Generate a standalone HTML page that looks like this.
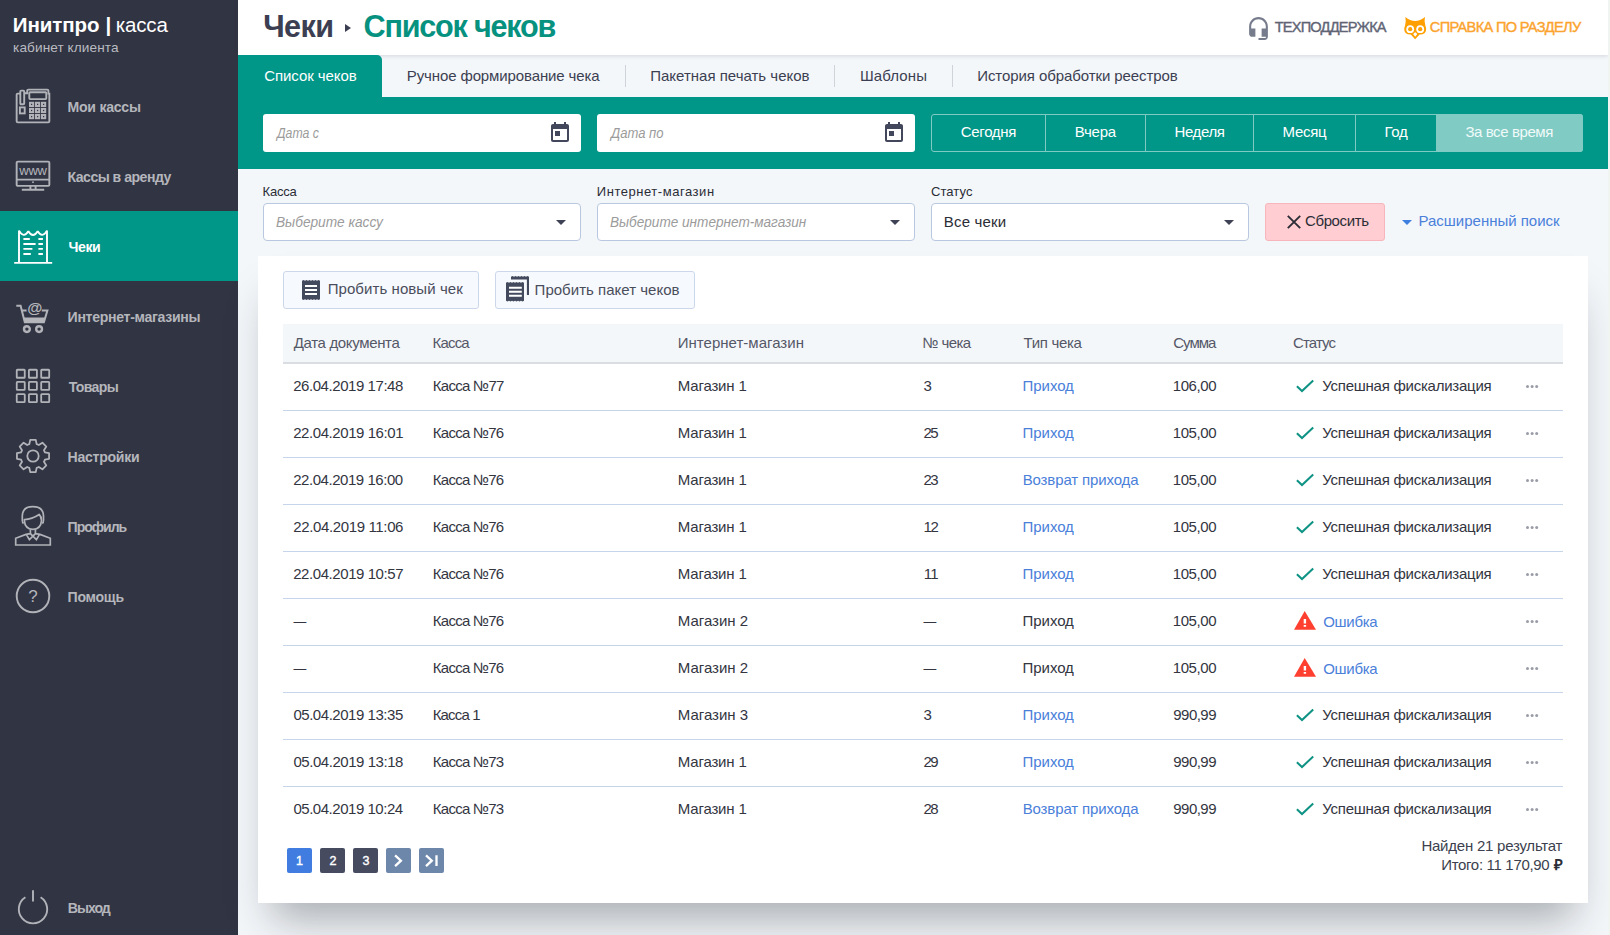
<!DOCTYPE html>
<html lang="ru">
<head>
<meta charset="utf-8">
<title>Чеки — Список чеков</title>
<style>
*{box-sizing:border-box;margin:0;padding:0}
html,body{width:1610px;height:935px;overflow:hidden}
body{font-family:"Liberation Sans",sans-serif;font-size:15px;color:#2b2d36;background:#f4f7fa;position:relative}
.t{position:absolute;white-space:pre;line-height:20px}
.md{-webkit-text-stroke:.4px currentColor}
svg{position:absolute;overflow:visible}
#side{position:absolute;left:0;top:0;width:238px;height:935px;background:#313442}
#act{position:absolute;left:0;top:211px;width:238px;height:70px;background:#009688}
.ic{fill:none;stroke:#b1b3b9;stroke-width:1.9}
.ic text{fill:#b4b6bc;stroke:none;font-family:"Liberation Sans",sans-serif}
#main{position:absolute;left:0;top:0;width:1608px;height:935px}
#hdr{position:absolute;left:238px;top:0;width:1370px;height:55px;background:#fff;box-shadow:0 1px 4px rgba(60,70,90,.18)}
#tri{position:absolute;left:345px;top:24px;width:0;height:0;border-left:6px solid #3c3f52;border-top:4.8px solid transparent;border-bottom:4.8px solid transparent}
#tab0{position:absolute;left:238px;top:55px;width:144px;height:42px;background:#009688;border-radius:0 5px 0 0}
.sep{position:absolute;top:65px;width:1px;height:22px;background:#cfd3da}
#bar{position:absolute;left:238px;top:97px;width:1370px;height:72px;background:#009688}
.din{position:absolute;top:114px;width:318px;height:38px;background:#fff;border-radius:3px}
#per{position:absolute;left:931px;top:114px;width:652px;height:38px;border:1px solid #7fcbc3;border-radius:3px}
#per i{position:absolute;top:0;width:1px;height:36px;background:#7fcbc3}
#per b{position:absolute;left:504px;top:-1px;width:147px;height:38px;background:#80cbc4;border-radius:0 3px 3px 0}
.sel{position:absolute;top:203px;width:318px;height:38px;border:1px solid #b9c8e0;border-radius:4px;background:#fff}
.sel i{position:absolute;left:291.800px;top:16.200px;width:0;height:0;border-top:5.500px solid #3f4254;border-left:5px solid transparent;border-right:5px solid transparent}
#rst{position:absolute;left:1265px;top:203px;width:120px;height:38px;background:#ffcdd2;border:1px solid #f6b6bb;border-radius:3px}
#advi{position:absolute;left:1402px;top:219.800px;width:0;height:0;border-top:5.200px solid #3f7fe0;border-left:5px solid transparent;border-right:5px solid transparent}
#card{position:absolute;left:258px;top:256px;width:1330px;height:647px;background:#fff;box-shadow:0 30px 40px -14px rgba(20,25,35,.34)}
.btn{position:absolute;top:15px;height:38px;border:1px solid #cdd7eb;background:#f6f9fd;border-radius:3px}
#th{position:absolute;left:25px;top:68px;width:1280px;height:40px;background:#f4f7fa;border-bottom:2px solid #dadee3}
.ln{position:absolute;left:25px;width:1280px;height:1px;background:#c7d5ea}
.dots{position:absolute;left:1267.5px;width:3px;height:3px;border-radius:2px;background:#9a9da7;box-shadow:4.6px 0 0 #9a9da7,9.2px 0 0 #9a9da7}
.pg{position:absolute;top:592px;width:25px;height:25px;border-radius:2px}
#strip{position:absolute;left:1608px;top:0;width:2px;height:935px;background:#f1f5f1}
</style>
</head>
<body>
<div id="side">
  <div id="act"></div>
  <span class="t" style="left:12.8px;top:15px;font-size:20.5px;letter-spacing:-0.09px;font-weight:bold;color:#fff">Инитпро</span><span class="t" style="left:105.4px;top:15px;font-size:20.5px;font-weight:bold;color:#fff">|</span><span class="t" style="left:115.7px;top:15px;font-size:20.5px;letter-spacing:-0.13px;color:#fff">касса</span>
  <span class="t" style="left:13.1px;top:37.6px;font-size:13.6px;letter-spacing:0.09px;color:#b9bbc1">кабинет клиента</span>
  <!-- Мои кассы -->
  <svg class="ic" style="left:16px;top:89px" width="34" height="34" viewBox="0 0 34 34">
    <path d="M4.3 4.6H1.8Q.65 4.6 .65 5.8V32.2Q.65 33.35 1.8 33.35H32.2Q33.35 33.35 33.35 32.2V5.4M8.2 4.2H11.2V1.8Q11.2 .65 12.4 .65H31.2Q32.4 .65 32.4 1.8V4.6H33.35V6"/>
    <rect x="4.3" y="1.6" width="3.9" height="13.6" rx=".8"/>
    <rect x="13.3" y="3.3" width="17" height="6.8" rx=".8"/>
    <rect x="3.9" y="18.4" width="4.8" height="6" />
    <g stroke-width="2">
    <rect x="14" y="13.8" width="3.2" height="3.2"/><rect x="20" y="13.8" width="3.2" height="3.2"/><rect x="26" y="13.8" width="3.2" height="3.2"/>
    <rect x="14" y="19.9" width="3.2" height="3.2"/><rect x="20" y="19.9" width="3.2" height="3.2"/><rect x="26" y="19.9" width="3.2" height="3.2"/>
    <rect x="14" y="26" width="3.2" height="3.2"/><rect x="20" y="26" width="3.2" height="3.2"/><rect x="26" y="26" width="3.2" height="3.2"/>
    </g>
  </svg>
  <span class="t" style="left:67.5px;top:96.6px;font-size:14.1px;letter-spacing:-0.26px;font-weight:bold;color:#b4b6bc">Мои кассы</span>
  <!-- Кассы в аренду -->
  <svg class="ic" style="left:16px;top:161px" width="34" height="30" viewBox="0 0 34 30">
    <rect x=".65" y=".65" width="32.7" height="24.2" rx="1.2"/>
    <path d="M.65 18.6H33.35M14.4 24.9V28.7M19.6 24.9V28.7M5.8 28.8H28.2"/>
    <circle cx="17" cy="21.2" r=".9" fill="#b4b6bc" stroke="none"/>
    <text x="17" y="14.2" font-size="13" text-anchor="middle" letter-spacing="-.2">www</text>
  </svg>
  <span class="t" style="left:67.5px;top:166.6px;font-size:14.1px;letter-spacing:-0.52px;font-weight:bold;color:#b4b6bc">Кассы в аренду</span>
  <!-- Чеки -->
  <svg style="left:14px;top:229px;fill:none;stroke:#fff;stroke-width:1.9;stroke-linejoin:bevel" width="38" height="36" viewBox="0 0 38 36">
    <path d="M.2 33.9H38.2M5 33.9V1.6Q9.700 9.800 14.300 2.200Q19 9.800 23.700 2.200Q28.300 9.800 33 1.600V33.900"/>
    <path stroke-width="1.8" d="M9.4 10H15.8M9.4 15H21.6M9.4 19.8H18.4M9.4 25H16.8M24.4 10H28.9M24.4 15H28.9M24.4 19.8H28.9M24.4 25H28.9"/>
  </svg>
  <span class="t" style="left:68.4px;top:236.6px;font-size:14.1px;letter-spacing:-0.37px;font-weight:bold;color:#fff">Чеки</span>
  <!-- Интернет-магазины -->
  <svg class="ic" style="left:16px;top:300px" width="34" height="34" viewBox="0 0 34 34">
    <path stroke-width="2" d="M.3 5.700H4.600L8.800 22.300H27.900L31.400 10.500H25.800M6 10.500H10.600"/>
    <path d="M7.4 17.4H29.6L27.9 22.6H8.8Z" fill="#b4b6bc" stroke="none"/>
    <circle cx="10.900" cy="29.100" r="2.900" stroke-width="2.400"/><circle cx="23.100" cy="29.100" r="2.900" stroke-width="2.400"/>
    <text x="18.700" y="12.700" font-size="15.500" font-weight="bold" text-anchor="middle">@</text>
  </svg>
  <span class="t" style="left:67.6px;top:306.6px;font-size:14.1px;letter-spacing:-0.31px;font-weight:bold;color:#b4b6bc">Интернет-магазины</span>
  <!-- Товары -->
  <svg class="ic" style="left:16px;top:369px;stroke-width:1.8" width="34" height="34" viewBox="0 0 34 34">
    <rect x=".75" y=".75" width="8" height="8" rx=".6"/><rect x="12.9" y=".75" width="8" height="8" rx=".6"/><rect x="25.2" y=".75" width="8" height="8" rx=".6"/>
    <rect x=".75" y="12.8" width="8" height="8" rx=".6"/><rect x="12.9" y="12.8" width="8" height="8" rx=".6"/><rect x="25.2" y="12.8" width="8" height="8" rx=".6"/>
    <rect x=".75" y="25.1" width="8" height="8" rx=".6"/><rect x="12.9" y="25.1" width="8" height="8" rx=".6"/><rect x="25.2" y="25.1" width="8" height="8" rx=".6"/>
  </svg>
  <span class="t" style="left:68.8px;top:376.6px;font-size:14.1px;letter-spacing:-0.67px;font-weight:bold;color:#b4b6bc">Товары</span>
  <!-- Настройки -->
  <svg class="ic" style="left:16px;top:439px;stroke-width:1.8;stroke-linejoin:round" width="34" height="34" viewBox="0 0 34 34">
    <path d="M13.34 5.15L14.24 0.93L19.76 0.93L20.66 5.15A12.4 12.4 0 0 1 22.79 6.03L26.41 3.69L30.31 7.59L27.97 11.21A12.4 12.4 0 0 1 28.85 13.34L33.07 14.24L33.07 19.76L28.85 20.66A12.4 12.4 0 0 1 27.97 22.79L30.31 26.41L26.41 30.31L22.79 27.97A12.4 12.4 0 0 1 20.66 28.85L19.76 33.07L14.24 33.07L13.34 28.85A12.4 12.4 0 0 1 11.21 27.97L7.59 30.31L3.69 26.41L6.03 22.79A12.4 12.4 0 0 1 5.15 20.66L0.93 19.76L0.93 14.24L5.15 13.34A12.4 12.4 0 0 1 6.03 11.21L3.69 7.59L7.59 3.69L11.21 6.03A12.4 12.4 0 0 1 13.34 5.15Z"/>
    <circle cx="17" cy="17" r="5.7"/>
  </svg>
  <span class="t" style="left:67.6px;top:446.6px;font-size:14.1px;letter-spacing:-0.29px;font-weight:bold;color:#b4b6bc">Настройки</span>
  <!-- Профиль -->
  <svg class="ic" style="left:15px;top:506px;stroke-width:1.7" width="36" height="40" viewBox="0 0 36 40">
    <path d="M8.6 17.5Q7.2 16.6 7.3 13.6V9.8Q7.6 .7 17.7 .7Q28.3 .7 28.5 9.8V13.6Q28.6 16.6 27.3 17.5"/>
    <path d="M9.4 13.7Q17 13.2 24.2 8.5Q26.4 10.5 26.5 14.5Q26 23 17.9 23.4Q9.8 23 9.4 14.5Z"/>
    <path d="M15.4 23.2V27.6M20.4 23.2V27.6M15.4 27.6L11 28.4L.7 32.3V39H35.3V32.3L25 28.4L20.4 27.6M15.4 27.6L17.9 30.2L20.4 27.6M11.4 28.6L14.4 33.6L17.9 30.2L21.4 33.6L24.4 28.6"/>
  </svg>
  <span class="t" style="left:67.6px;top:516.6px;font-size:14.1px;letter-spacing:-1.05px;font-weight:bold;color:#b4b6bc">Профиль</span>
  <!-- Помощь -->
  <svg class="ic" style="left:16px;top:579px" width="34" height="34" viewBox="0 0 34 34">
    <circle cx="17" cy="17" r="16.3"/>
    <text x="17" y="23" font-size="17" text-anchor="middle">?</text>
  </svg>
  <span class="t" style="left:67.6px;top:586.6px;font-size:14.1px;letter-spacing:-0.29px;font-weight:bold;color:#b4b6bc">Помощь</span>
  <!-- Выход -->
  <svg class="ic" style="left:18px;top:890px" width="30" height="34" viewBox="0 0 30 34">
    <path d="M15 .2V11.4M7.4 7.2A14.2 14.2 0 1 0 22.6 7.2"/>
  </svg>
  <span class="t" style="left:67.8px;top:897.6px;font-size:14.1px;letter-spacing:-1.02px;font-weight:bold;color:#b4b6bc">Выход</span>
</div>
<div id="main">
  <div id="hdr"></div>
  <span class="t" style="left:263.2px;top:16.2px;font-size:30.6px;letter-spacing:-0.58px;font-weight:bold;color:#3c3f52">Чеки</span><div id="tri"></div><span class="t" style="left:363.5px;top:16.2px;font-size:30.6px;letter-spacing:-1.21px;font-weight:bold;color:#07917f">Список чеков</span>
  <svg style="left:1245.5px;top:15.5px" width="25" height="25" viewBox="0 0 24 24"><path fill="#767c8b" d="M12 1c-4.97 0-9 4.03-9 9v7c0 1.66 1.34 3 3 3h3v-8H5v-2c0-3.870 3.130-7 7-7s7 3.130 7 7v2h-4v8h4v1h-7v2h6c1.660 0 3-1.340 3-3V10c0-4.970-4.030-9-9-9z"/></svg>
  <span class="t md" style="left:1274.7px;top:16.8px;font-size:14.6px;letter-spacing:-0.8px;color:#5f6475">ТЕХПОДДЕРЖКА</span>
  <svg style="left:1403.8px;top:16.6px" width="22.4" height="22.2" viewBox="0 0 22.4 22.2">
    <path fill="#ffa000" d="M1.3 0Q11.1 8.2 21 0Q20 4.500 21.300 8.200Q23.300 13.500 20.500 16.200Q18.500 17.700 15.600 17.500L11.100 22.200L6.800 17.500Q3.900 17.700 1.900 16.200Q-.900 13.500 1.100 8.200Q2.400 4.500 1.300 0Z"/>
    <circle cx="6.2" cy="12.2" r="3.9" fill="#fff"/><circle cx="16.2" cy="12.2" r="3.9" fill="#fff"/>
    <circle cx="6.2" cy="12.2" r="2.1" fill="#ffa000"/><circle cx="16.2" cy="12.2" r="2.1" fill="#ffa000"/>
    <path fill="#fff" d="M11.2 15.200Q13.400 16 12.900 17.600L11.200 19.700L9.500 17.600Q9 16 11.200 15.200Z"/>
  </svg>
  <span class="t md" style="left:1429.8px;top:16.8px;font-size:14.6px;letter-spacing:-0.68px;color:#fba32e">СПРАВКА ПО РАЗДЕЛУ</span>
  <div id="tab0"></div>
  <span class="t" style="left:264.2px;top:66px;font-size:15px;letter-spacing:-0.07px;color:#fff">Список чеков</span><span class="t" style="left:406.8px;top:66px;font-size:15px;letter-spacing:-0.12px;color:#3c3f52">Ручное формирование чека</span><div class="sep" style="left:625px"></div><span class="t" style="left:650.2px;top:66px;font-size:15px;color:#3c3f52">Пакетная печать чеков</span><div class="sep" style="left:834px"></div><span class="t" style="left:859.9px;top:66px;font-size:15px;letter-spacing:0.13px;color:#3c3f52">Шаблоны</span><div class="sep" style="left:952px"></div><span class="t" style="left:977.2px;top:66px;font-size:15px;letter-spacing:-0.08px;color:#3c3f52">История обработки реестров</span>
  <div id="bar"></div>
  <div class="din" style="left:263px"><svg style="left:284.500px;top:6.800px" width="24" height="24" viewBox="0 0 24 24"><path fill="#43475b" d="M19 3h-1V1h-2v2H8V1H6v2H5c-1.110 0-1.990.900-1.990 2L3 19c0 1.100.890 2 2 2h14c1.100 0 2-.900 2-2V5c0-1.100-.900-2-2-2zm0 16H5V8h14v11zM7 10h5v5H7z"/></svg></div>
  <div class="din" style="left:597px"><svg style="left:284.500px;top:6.800px" width="24" height="24" viewBox="0 0 24 24"><path fill="#43475b" d="M19 3h-1V1h-2v2H8V1H6v2H5c-1.110 0-1.990.900-1.990 2L3 19c0 1.100.890 2 2 2h14c1.100 0 2-.900 2-2V5c0-1.100-.900-2-2-2zm0 16H5V8h14v11zM7 10h5v5H7z"/></svg></div>
  <span class="t" style="left:276.9px;top:123.2px;font-size:14.6px;transform:scaleX(0.839);transform-origin:0 0;font-style:italic;color:#9b9b9b">Дата с</span><span class="t" style="left:610.5px;top:123.2px;font-size:14.6px;transform:scaleX(0.894);transform-origin:0 0;font-style:italic;color:#9b9b9b">Дата по</span>
  <div id="per"><b></b><i style="left:113px"></i><i style="left:213px"></i><i style="left:321px"></i><i style="left:423px"></i></div>
  <span class="t" style="left:960.7px;top:122.3px;font-size:15px;letter-spacing:-0.29px;color:#fff">Сегодня</span><span class="t" style="left:1074.7px;top:122.3px;font-size:15px;letter-spacing:-0.23px;color:#fff">Вчера</span><span class="t" style="left:1174.5px;top:122.3px;font-size:15px;letter-spacing:-0.37px;color:#fff">Неделя</span><span class="t" style="left:1282.5px;top:122.3px;font-size:15px;letter-spacing:-0.27px;color:#fff">Месяц</span><span class="t" style="left:1384.4px;top:122.3px;font-size:15px;letter-spacing:-0.29px;color:#fff">Год</span><span class="t" style="left:1465.4px;top:122.3px;font-size:15px;letter-spacing:-0.41px;color:#f1faf9">За все время</span>
  <span class="t" style="left:262.6px;top:182px;font-size:13px;letter-spacing:-0.25px;color:#2b2d36">Касса</span><span class="t" style="left:596.8px;top:182px;font-size:13px;letter-spacing:0.54px;color:#2b2d36">Интернет-магазин</span><span class="t" style="left:931.0px;top:182px;font-size:13px;letter-spacing:0.07px;color:#2b2d36">Статус</span>
  <div class="sel" style="left:263px"><i></i></div>
  <div class="sel" style="left:597px"><i></i></div>
  <div class="sel" style="left:931px"><i></i></div>
  <span class="t" style="left:276.0px;top:212.2px;font-size:15px;transform:scaleX(0.912);transform-origin:0 0;font-style:italic;color:#9b9b9b">Выберите кассу</span><span class="t" style="left:610.3px;top:212.2px;font-size:15px;transform:scaleX(0.906);transform-origin:0 0;font-style:italic;color:#9b9b9b">Выберите интернет-магазин</span><span class="t" style="left:943.8px;top:212px;font-size:15px;letter-spacing:0.18px;color:#2b2d36">Все чеки</span>
  <div id="rst"><svg style="left:20.500px;top:11.400px" width="14" height="14" viewBox="0 0 14 14"><path d="M.8 .8L13.200 13.200M13.200 .8L.8 13.200" stroke="#2b2d36" stroke-width="1.900" fill="none"/></svg></div>
  <span class="t" style="left:1305.0px;top:211.4px;font-size:15px;letter-spacing:-0.39px;color:#2b2d36">Сбросить</span>
  <div id="advi"></div><span class="t" style="left:1418.5px;top:211.2px;font-size:15px;letter-spacing:-0.01px;color:#4a80da">Расширенный поиск</span>
  <div id="card">
    <div class="btn" style="left:25px;width:196px">
      <svg style="left:18px;top:7.900px" width="18" height="20" viewBox="0 0 18 20"><path fill="#444a5e" d="M0 .7L1.500 0L3 .7L4.500 0L6 .7L7.500 0L9 .7L10.500 0L12 .7L13.500 0L15 .7L16.500 0L18 .7V19.300L16.500 20L15 19.300L13.500 20L12 19.300L10.500 20L9 19.300L7.500 20L6 19.300L4.500 20L3 19.300L1.500 20L0 19.300Z"/><path d="M3 6H15M3 10H15M3 14H15" stroke="#fff" stroke-width="2"/></svg>
    </div>
    <div class="btn" style="left:237px;width:200px">
      <svg style="left:10.200px;top:4.300px" width="23" height="26" viewBox="0 0 23 26"><path fill="#444a5e" d="M0 6.700L1.500 6L3 6.700L4.500 6L6 6.700L7.500 6L9 6.700L10.500 6L12 6.700L13.500 6L15 6.700L16.500 6L18 6.700V24.700L16.500 25.400L15 24.700L13.500 25.400L12 24.700L10.500 25.400L9 24.700L7.500 25.400L6 24.700L4.500 25.400L3 24.700L1.500 25.400L0 24.700Z"/><path fill="#444a5e" d="M5 .7L6.500 0L8 .7L9.500 0L11 .7L12.500 0L14 .7L15.500 0L17 .7L18.500 0L20 .7L21.500 0L23 .7V19H20.900V3.500H5Z"/><path d="M3 11.700H15.800M3 15.700H15.800M3 19.700H15.800" stroke="#fff" stroke-width="2"/></svg>
    </div>
    <span class="t" style="left:69.7px;top:23.2px;font-size:15px;letter-spacing:0.07px;color:#4a4d5c">Пробить новый чек</span><span class="t" style="left:276.6px;top:23.7px;font-size:15px;letter-spacing:0.02px;color:#4a4d5c">Пробить пакет чеков</span>
    <div id="th"></div>
    <span class="t" style="left:35.8px;top:76.9px;font-size:15px;letter-spacing:-0.35px;color:#555867">Дата документа</span><span class="t" style="left:174.6px;top:76.9px;font-size:15px;letter-spacing:-0.84px;color:#555867">Касса</span><span class="t" style="left:419.7px;top:76.9px;font-size:15px;letter-spacing:0.02px;color:#555867">Интернет-магазин</span><span class="t" style="left:664.6px;top:76.9px;font-size:15px;letter-spacing:-0.65px;color:#555867">№ чека</span><span class="t" style="left:765.6px;top:76.9px;font-size:15px;letter-spacing:-0.34px;color:#555867">Тип чека</span><span class="t" style="left:915.3px;top:76.9px;font-size:15px;letter-spacing:-1.04px;color:#555867">Сумма</span><span class="t" style="left:1035.1px;top:76.9px;font-size:15px;letter-spacing:-0.91px;color:#555867">Статус</span>
    <div class="row"><span class="t" style="left:35.2px;top:119.9px;font-size:15px;letter-spacing:-0.44px;color:#33353f">26.04.2019 17:48</span><span class="t" style="left:174.8px;top:119.9px;font-size:15px;letter-spacing:-0.72px;color:#33353f">Касса №77</span><span class="t" style="left:419.8px;top:119.9px;font-size:15px;letter-spacing:-0.18px;color:#33353f">Магазин 1</span><span class="t" style="left:665.4px;top:119.9px;font-size:15px;color:#33353f">3</span><span class="t" style="left:764.6px;top:119.9px;font-size:15px;letter-spacing:-0.07px;color:#4a80da">Приход</span><span class="t" style="left:914.8px;top:119.9px;font-size:15px;letter-spacing:-0.43px;color:#33353f">106,00</span><span class="t" style="left:1064.3px;top:119.9px;font-size:15px;letter-spacing:-0.25px;color:#33353f">Успешная фискализация</span><svg style="left:1038px;top:123.2px" width="19" height="14" viewBox="0 0 19 14"><path d="M.9 7.300L6 12.100L17.200 1.500" fill="none" stroke="#0e9384" stroke-width="2"/></svg><div class="dots" style="top:129.1px"></div><div class="ln" style="top:154px"></div></div>
    <div class="row"><span class="t" style="left:35.2px;top:166.9px;font-size:15px;letter-spacing:-0.43px;color:#33353f">22.04.2019 16:01</span><span class="t" style="left:174.8px;top:166.9px;font-size:15px;letter-spacing:-0.75px;color:#33353f">Касса №76</span><span class="t" style="left:419.8px;top:166.9px;font-size:15px;letter-spacing:-0.18px;color:#33353f">Магазин 1</span><span class="t" style="left:665.4px;top:166.9px;font-size:15px;letter-spacing:-1.45px;color:#33353f">25</span><span class="t" style="left:764.6px;top:166.9px;font-size:15px;letter-spacing:-0.07px;color:#4a80da">Приход</span><span class="t" style="left:914.8px;top:166.9px;font-size:15px;letter-spacing:-0.43px;color:#33353f">105,00</span><span class="t" style="left:1064.3px;top:166.9px;font-size:15px;letter-spacing:-0.25px;color:#33353f">Успешная фискализация</span><svg style="left:1038px;top:170.2px" width="19" height="14" viewBox="0 0 19 14"><path d="M.9 7.300L6 12.100L17.200 1.500" fill="none" stroke="#0e9384" stroke-width="2"/></svg><div class="dots" style="top:176.1px"></div><div class="ln" style="top:201px"></div></div>
    <div class="row"><span class="t" style="left:35.2px;top:213.9px;font-size:15px;letter-spacing:-0.45px;color:#33353f">22.04.2019 16:00</span><span class="t" style="left:174.8px;top:213.9px;font-size:15px;letter-spacing:-0.75px;color:#33353f">Касса №76</span><span class="t" style="left:419.8px;top:213.9px;font-size:15px;letter-spacing:-0.18px;color:#33353f">Магазин 1</span><span class="t" style="left:665.4px;top:213.9px;font-size:15px;letter-spacing:-1.45px;color:#33353f">23</span><span class="t" style="left:764.7px;top:213.9px;font-size:15px;letter-spacing:-0.13px;color:#4a80da">Возврат прихода</span><span class="t" style="left:914.8px;top:213.9px;font-size:15px;letter-spacing:-0.43px;color:#33353f">105,00</span><span class="t" style="left:1064.3px;top:213.9px;font-size:15px;letter-spacing:-0.25px;color:#33353f">Успешная фискализация</span><svg style="left:1038px;top:217.2px" width="19" height="14" viewBox="0 0 19 14"><path d="M.9 7.300L6 12.100L17.200 1.500" fill="none" stroke="#0e9384" stroke-width="2"/></svg><div class="dots" style="top:223.1px"></div><div class="ln" style="top:248px"></div></div>
    <div class="row"><span class="t" style="left:35.2px;top:260.9px;font-size:15px;letter-spacing:-0.36px;color:#33353f">22.04.2019 11:06</span><span class="t" style="left:174.8px;top:260.9px;font-size:15px;letter-spacing:-0.75px;color:#33353f">Касса №76</span><span class="t" style="left:419.8px;top:260.9px;font-size:15px;letter-spacing:-0.18px;color:#33353f">Магазин 1</span><span class="t" style="left:665.6px;top:260.9px;font-size:15px;letter-spacing:-1.55px;color:#33353f">12</span><span class="t" style="left:764.6px;top:260.9px;font-size:15px;letter-spacing:-0.07px;color:#4a80da">Приход</span><span class="t" style="left:914.8px;top:260.9px;font-size:15px;letter-spacing:-0.43px;color:#33353f">105,00</span><span class="t" style="left:1064.3px;top:260.9px;font-size:15px;letter-spacing:-0.25px;color:#33353f">Успешная фискализация</span><svg style="left:1038px;top:264.2px" width="19" height="14" viewBox="0 0 19 14"><path d="M.9 7.300L6 12.100L17.200 1.500" fill="none" stroke="#0e9384" stroke-width="2"/></svg><div class="dots" style="top:270.1px"></div><div class="ln" style="top:295px"></div></div>
    <div class="row"><span class="t" style="left:35.2px;top:307.9px;font-size:15px;letter-spacing:-0.43px;color:#33353f">22.04.2019 10:57</span><span class="t" style="left:174.8px;top:307.9px;font-size:15px;letter-spacing:-0.75px;color:#33353f">Касса №76</span><span class="t" style="left:419.8px;top:307.9px;font-size:15px;letter-spacing:-0.18px;color:#33353f">Магазин 1</span><span class="t" style="left:665.7px;top:307.9px;font-size:15px;letter-spacing:-0.55px;color:#33353f">11</span><span class="t" style="left:764.6px;top:307.9px;font-size:15px;letter-spacing:-0.07px;color:#4a80da">Приход</span><span class="t" style="left:914.8px;top:307.9px;font-size:15px;letter-spacing:-0.43px;color:#33353f">105,00</span><span class="t" style="left:1064.3px;top:307.9px;font-size:15px;letter-spacing:-0.25px;color:#33353f">Успешная фискализация</span><svg style="left:1038px;top:311.2px" width="19" height="14" viewBox="0 0 19 14"><path d="M.9 7.300L6 12.100L17.200 1.500" fill="none" stroke="#0e9384" stroke-width="2"/></svg><div class="dots" style="top:317.1px"></div><div class="ln" style="top:342px"></div></div>
    <div class="row"><span class="t" style="left:35.4px;top:355.9px;font-size:12.8px;color:#33353f">—</span><span class="t" style="left:174.8px;top:354.9px;font-size:15px;letter-spacing:-0.75px;color:#33353f">Касса №76</span><span class="t" style="left:419.8px;top:354.9px;font-size:15px;letter-spacing:-0.02px;color:#33353f">Магазин 2</span><span class="t" style="left:665.6px;top:355.9px;font-size:12.8px;color:#33353f">—</span><span class="t" style="left:764.6px;top:354.9px;font-size:15px;letter-spacing:-0.07px;color:#33353f">Приход</span><span class="t" style="left:914.8px;top:354.9px;font-size:15px;letter-spacing:-0.43px;color:#33353f">105,00</span><span class="t" style="left:1065.2px;top:355.9px;font-size:15px;letter-spacing:-0.28px;color:#4a80da">Ошибка</span><svg style="left:1035.900px;top:355.2px" width="22" height="19" viewBox="0 0 22 19"><path d="M10.700 0L22 18.700H0Z" fill="#ff4030"/><path d="M10.900 8V12.400M10.900 13.900V15.800" stroke="#fff" stroke-width="2.400"/></svg><div class="dots" style="top:364.1px"></div><div class="ln" style="top:389px"></div></div>
    <div class="row"><span class="t" style="left:35.4px;top:402.9px;font-size:12.8px;color:#33353f">—</span><span class="t" style="left:174.8px;top:401.9px;font-size:15px;letter-spacing:-0.75px;color:#33353f">Касса №76</span><span class="t" style="left:419.8px;top:401.9px;font-size:15px;letter-spacing:-0.02px;color:#33353f">Магазин 2</span><span class="t" style="left:665.6px;top:402.9px;font-size:12.8px;color:#33353f">—</span><span class="t" style="left:764.6px;top:401.9px;font-size:15px;letter-spacing:-0.07px;color:#33353f">Приход</span><span class="t" style="left:914.8px;top:401.9px;font-size:15px;letter-spacing:-0.43px;color:#33353f">105,00</span><span class="t" style="left:1065.2px;top:402.9px;font-size:15px;letter-spacing:-0.28px;color:#4a80da">Ошибка</span><svg style="left:1035.900px;top:402.2px" width="22" height="19" viewBox="0 0 22 19"><path d="M10.700 0L22 18.700H0Z" fill="#ff4030"/><path d="M10.900 8V12.400M10.900 13.900V15.800" stroke="#fff" stroke-width="2.400"/></svg><div class="dots" style="top:411.1px"></div><div class="ln" style="top:436px"></div></div>
    <div class="row"><span class="t" style="left:35.4px;top:448.9px;font-size:15px;letter-spacing:-0.46px;color:#33353f">05.04.2019 13:35</span><span class="t" style="left:174.7px;top:448.9px;font-size:15px;letter-spacing:-0.83px;color:#33353f">Касса 1</span><span class="t" style="left:419.8px;top:448.9px;font-size:15px;letter-spacing:-0.02px;color:#33353f">Магазин 3</span><span class="t" style="left:665.4px;top:448.9px;font-size:15px;color:#33353f">3</span><span class="t" style="left:764.6px;top:448.9px;font-size:15px;letter-spacing:-0.07px;color:#4a80da">Приход</span><span class="t" style="left:915.3px;top:448.9px;font-size:15px;letter-spacing:-0.53px;color:#33353f">990,99</span><span class="t" style="left:1064.3px;top:448.9px;font-size:15px;letter-spacing:-0.25px;color:#33353f">Успешная фискализация</span><svg style="left:1038px;top:452.2px" width="19" height="14" viewBox="0 0 19 14"><path d="M.9 7.300L6 12.100L17.200 1.500" fill="none" stroke="#0e9384" stroke-width="2"/></svg><div class="dots" style="top:458.1px"></div><div class="ln" style="top:483px"></div></div>
    <div class="row"><span class="t" style="left:35.4px;top:495.9px;font-size:15px;letter-spacing:-0.45px;color:#33353f">05.04.2019 13:18</span><span class="t" style="left:174.8px;top:495.9px;font-size:15px;letter-spacing:-0.75px;color:#33353f">Касса №73</span><span class="t" style="left:419.8px;top:495.9px;font-size:15px;letter-spacing:-0.18px;color:#33353f">Магазин 1</span><span class="t" style="left:665.4px;top:495.9px;font-size:15px;letter-spacing:-1.45px;color:#33353f">29</span><span class="t" style="left:764.6px;top:495.9px;font-size:15px;letter-spacing:-0.07px;color:#4a80da">Приход</span><span class="t" style="left:915.3px;top:495.9px;font-size:15px;letter-spacing:-0.53px;color:#33353f">990,99</span><span class="t" style="left:1064.3px;top:495.9px;font-size:15px;letter-spacing:-0.25px;color:#33353f">Успешная фискализация</span><svg style="left:1038px;top:499.2px" width="19" height="14" viewBox="0 0 19 14"><path d="M.9 7.300L6 12.100L17.200 1.500" fill="none" stroke="#0e9384" stroke-width="2"/></svg><div class="dots" style="top:505.1px"></div><div class="ln" style="top:530px"></div></div>
    <div class="row"><span class="t" style="left:35.4px;top:542.9px;font-size:15px;letter-spacing:-0.47px;color:#33353f">05.04.2019 10:24</span><span class="t" style="left:174.8px;top:542.9px;font-size:15px;letter-spacing:-0.75px;color:#33353f">Касса №73</span><span class="t" style="left:419.8px;top:542.9px;font-size:15px;letter-spacing:-0.18px;color:#33353f">Магазин 1</span><span class="t" style="left:665.4px;top:542.9px;font-size:15px;letter-spacing:-1.45px;color:#33353f">28</span><span class="t" style="left:764.7px;top:542.9px;font-size:15px;letter-spacing:-0.13px;color:#4a80da">Возврат прихода</span><span class="t" style="left:915.3px;top:542.9px;font-size:15px;letter-spacing:-0.53px;color:#33353f">990,99</span><span class="t" style="left:1064.3px;top:542.9px;font-size:15px;letter-spacing:-0.25px;color:#33353f">Успешная фискализация</span><svg style="left:1038px;top:546.2px" width="19" height="14" viewBox="0 0 19 14"><path d="M.9 7.300L6 12.100L17.200 1.500" fill="none" stroke="#0e9384" stroke-width="2"/></svg><div class="dots" style="top:552.1px"></div></div>

    <div class="pg" style="left:29px;background:#417de0"></div><span class="t md" style="left:38.1px;top:595.3px;font-size:12.5px;color:#fff">1</span>
    <div class="pg" style="left:62px;background:#464b60"></div><span class="t md" style="left:71.5px;top:595.3px;font-size:12.5px;color:#fff">2</span>
    <div class="pg" style="left:95px;background:#464b60"></div><span class="t md" style="left:104.5px;top:595.3px;font-size:12.5px;color:#fff">3</span>
    <div class="pg" style="left:128px;background:#6d87ab"><svg width="25" height="25" viewBox="0 0 25 25"><path d="M9.100 7.300L14.900 12.700L9.100 18.100" fill="none" stroke="#fff" stroke-width="2.300"/></svg></div>
    <div class="pg" style="left:161px;background:#6d87ab"><svg width="25" height="25" viewBox="0 0 25 25"><path d="M7 7.300L12.800 12.700L7 18.100M17.500 7.300V18.100" fill="none" stroke="#fff" stroke-width="2.300"/></svg></div>
    <span class="t" style="left:1163.4px;top:579.9px;font-size:15px;letter-spacing:-0.23px;color:#3c3f4e">Найден 21 результат</span><span class="t" style="left:1183.2px;top:598.9px;font-size:15px;letter-spacing:-0.32px;color:#3c3f4e">Итого: 11 170,90</span><span class="t" style="left:1296.3px;top:598.9px;font-size:15px;font-weight:bold;color:#2b2d36">₽</span>
  </div>
</div>
<div id="strip"></div>
</body>
</html>
